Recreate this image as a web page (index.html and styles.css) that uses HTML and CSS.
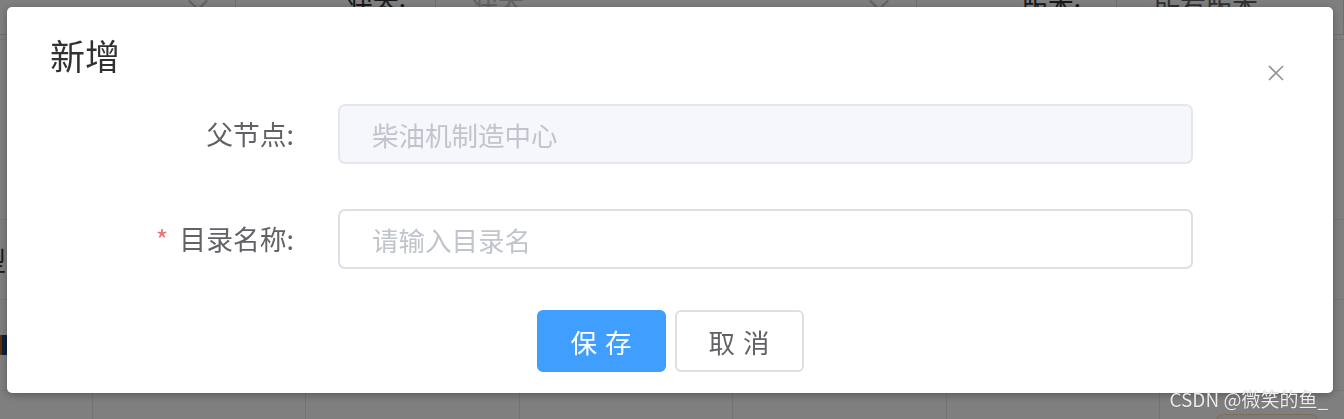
FILE: index.html
```html
<!DOCTYPE html>
<html lang="zh-CN">
<head>
    <meta charset="UTF-8">
    <meta name="viewport" content="width=device-width, initial-scale=1.0">
    <title>目录管理</title>
    <link rel="stylesheet" href="styles.css">
</head>
<body>
    <!-- Page behind the dialog -->
    <div class="page">
        <div class="filters">
            <div class="select select-a"><span class="arrow"></span></div>
            <span class="filter-label label-status">状态:</span>
            <div class="select select-b"><span class="placeholder">状态</span><span class="arrow"></span></div>
            <span class="filter-label label-version">版本:</span>
            <div class="select select-c"><span class="value">所有版本</span></div>
        </div>
        <div class="table">
            <div class="row row-head"></div>
            <div class="row row-one"><span class="cell-title">模型</span></div>
            <div class="row row-two"><span class="cell-icon"></span></div>
            <div class="row row-cols">
                <div class="cell cell-first"></div>
                <div class="cell"></div>
                <div class="cell"></div>
                <div class="cell"></div>
                <div class="cell"></div>
                <div class="cell"></div>
                <div class="cell cell-last"><span class="warn-btn"></span></div>
            </div>
        </div>
    </div>

    <div class="mask"></div>

    <!-- Add dialog -->
    <div class="dialog-wrapper">
        <div class="dialog">
            <div class="dialog-header">
                <span class="dialog-title">新增</span>
                <button class="dialog-close" aria-label="关闭">
                    <svg width="16" height="16" viewBox="0 0 16 16">
                        <path d="M1 1 L15 15 M15 1 L1 15" stroke="#909399" stroke-width="1.6" fill="none"/>
                    </svg>
                </button>
            </div>
            <div class="dialog-body">
                <div class="form-item">
                    <label class="form-label">父节点:</label>
                    <div class="form-content">
                        <input class="form-input" type="text" value="柴油机制造中心" disabled>
                    </div>
                </div>
                <div class="form-item">
                    <label class="form-label required">目录名称:</label>
                    <div class="form-content">
                        <input class="form-input" type="text" placeholder="请输入目录名">
                    </div>
                </div>
            </div>
            <div class="dialog-footer">
                <button class="btn btn-primary">保存</button>
                <button class="btn btn-default">取消</button>
            </div>
        </div>
    </div>

    <div class="watermark">CSDN @微笑的鱼_</div>
</body>
</html>
```

FILE: styles.css
```css
/* General */
body {
    margin: 0;
    padding: 0;
    background: #fff;
    font-family: "Noto Sans CJK SC", "Noto Sans", sans-serif;
    color: #606266;
    overflow: hidden;
}

/* Page behind */
.page {
    width: 1344px;
    height: 419px;
    overflow: hidden;
}
.filters {
    display: flex;
    align-items: center;
    height: 66px;
    margin-top: -26px;
    border-bottom: 1px solid #ebeef5;
    box-sizing: border-box;
}
.select {
    position: relative;
    height: 56px;
    border: 1px solid #dcdfe6;
    box-sizing: border-box;
    font-size: 26px;
    display: flex;
    align-items: center;
}
.select-a {
    width: 272px;
    margin-left: -36px;
}
.select-b {
    width: 482px;
    padding-left: 36px;
}
.select-c {
    flex: 1;
    padding-left: 37px;
    color: #606266;
}
.select .placeholder {
    color: #c0c4cc;
}
.select .arrow {
    position: absolute;
    right: 30px;
    top: 14px;
    width: 12px;
    height: 12px;
    border-right: 2px solid #c0c4cc;
    border-bottom: 2px solid #c0c4cc;
    transform: rotate(45deg);
}
.filter-label {
    width: 199px;
    text-align: right;
    font-size: 26px;
    color: #303133;
    box-sizing: border-box;
}
.label-status {
    padding-right: 29px;
}
.label-version {
    padding-right: 35px;
}
.row {
    border-bottom: 1px solid #ebeef5;
    box-sizing: border-box;
}
.row-head {
    height: 180px;
}
.row-one {
    height: 80px;
    display: flex;
    align-items: center;
}
.cell-title {
    margin-left: -46px;
    font-size: 26px;
    color: #303133;
}
.row-two {
    height: 91px;
    display: flex;
    align-items: center;
}
.cell-icon {
    width: 8px;
    height: 20px;
    background: #1f3f7a;
    border-left: 2px solid #c06020;
}
.row-cols {
    display: grid;
    grid-template-columns: 93px 213px 214px 213px 214px 213px 1fr;
    height: 28px;
    border-bottom: none;
}
.cell {
    border-right: 1px solid #e4e7ed;
}
.cell-last {
    border-right: none;
    padding: 23px 0 0 55px;
}
.warn-btn {
    display: block;
    width: 102px;
    height: 40px;
    border: 1px solid #f5dab1;
    border-radius: 8px;
    background: #fdf6ec;
}

/* Overlay */
.mask {
    position: fixed;
    inset: 0;
    background: rgba(0, 0, 0, 0.5);
}

/* Dialog */
.dialog-wrapper {
    position: fixed;
    inset: 0;
    padding: 7px 0 0 7px;
}
.dialog {
    position: relative;
    width: 1326px;
    background: #fff;
    border-radius: 5px;
    box-shadow: 0 2px 8px rgba(0, 0, 0, 0.3);
}
.dialog-header {
    padding: 24px 43px 0;
}
.dialog-title {
    display: block;
    font-size: 35px;
    line-height: 48px;
    color: #303133;
}
.dialog-close {
    position: absolute;
    top: 58px;
    right: 49px;
    width: 16px;
    height: 16px;
    padding: 0;
    border: none;
    background: transparent;
    cursor: pointer;
}
.dialog-close svg {
    display: block;
}
.dialog-body {
    padding: 25px 140px 0 43px;
}
.form-item {
    display: flex;
    margin-bottom: 45px;
}
.form-item:last-child {
    margin-bottom: 0;
}
.form-label {
    width: 288px;
    padding-right: 44px;
    box-sizing: border-box;
    text-align: right;
    font-size: 26.8px;
    line-height: 60px;
    color: #606266;
}
.form-label.required::before {
    content: "*";
    color: #f56c6c;
    margin-right: 11px;
}
.form-content {
    flex: 1;
}
.form-input {
    display: block;
    width: 100%;
    height: 60px;
    box-sizing: border-box;
    padding: 0 32px;
    border: 2px solid #dcdfe6;
    border-radius: 7px;
    font-family: inherit;
    font-size: 26.5px;
    color: #606266;
    background: #fff;
    outline: none;
}
.form-input::placeholder {
    color: #c0c4cc;
}
.form-input:disabled {
    background: #f5f7fa;
    border-color: #e4e7ed;
    color: #c0c4cc;
}
.dialog-footer {
    display: flex;
    justify-content: center;
    gap: 9px;
    padding: 41px 0 21px;
}
.btn {
    width: 129px;
    height: 62px;
    box-sizing: border-box;
    border-radius: 6px;
    font-family: inherit;
    font-size: 26.5px;
    letter-spacing: 8px;
    padding: 0 0 0 8px;
    cursor: pointer;
}
.btn-primary {
    background: #409eff;
    border: 2px solid #409eff;
    color: #fff;
}
.btn-default {
    background: #fff;
    border: 2px solid #dcdfe6;
    color: #606266;
}

/* Watermark */
.watermark {
    position: fixed;
    right: 16px;
    bottom: 7px;
    font-size: 19px;
    color: rgba(255, 255, 255, 0.9);
    text-shadow: 0 0 1px rgba(0, 0, 0, 0.5);
}
```
